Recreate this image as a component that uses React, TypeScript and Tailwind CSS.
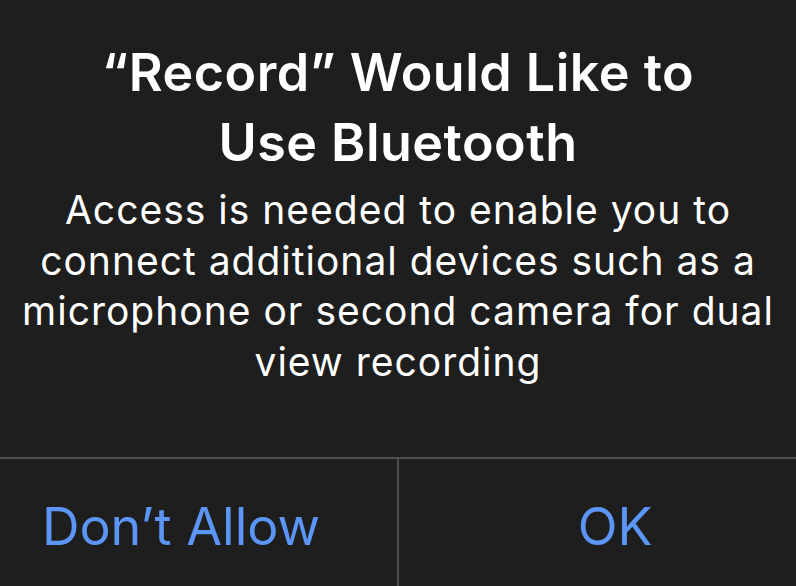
export default function App() {
  return (
    <div className="w-[796px] h-[586px] overflow-hidden bg-[#1e1e1e] text-white" style={{ fontFamily: "Inter, 'Noto Sans', sans-serif" }}>
      <div className="w-[866px] ml-[-35px] flex flex-col">
        <div className="pt-[38px] px-10 text-center text-[52px] leading-[70px] font-semibold tracking-[0.5px]">
          <div>“Record” Would Like to</div>
          <div>Use Bluetooth</div>
        </div>
        <div className="mt-[7px] text-center text-[39px] leading-[50.5px] font-normal tracking-[1px]">
          <div>Access is needed to enable you to</div>
          <div>connect additional devices such as a</div>
          <div>microphone or second camera for dual</div>
          <div>view recording</div>
        </div>
        <div className="mt-[70px] h-[2px] bg-[#4d4d50]" />
        <div className="flex h-[140px]">
          <button className="flex-1 pt-[42px] self-start text-center text-[52px] leading-none text-[#5b95f5] font-normal">
            Don’t Allow
          </button>
          <div className="w-[2px] bg-[#4d4d50]" />
          <button className="flex-1 pt-[42px] self-start text-center text-[52px] leading-none text-[#5b95f5] font-normal">
            OK
          </button>
        </div>
      </div>
    </div>
  );
}
